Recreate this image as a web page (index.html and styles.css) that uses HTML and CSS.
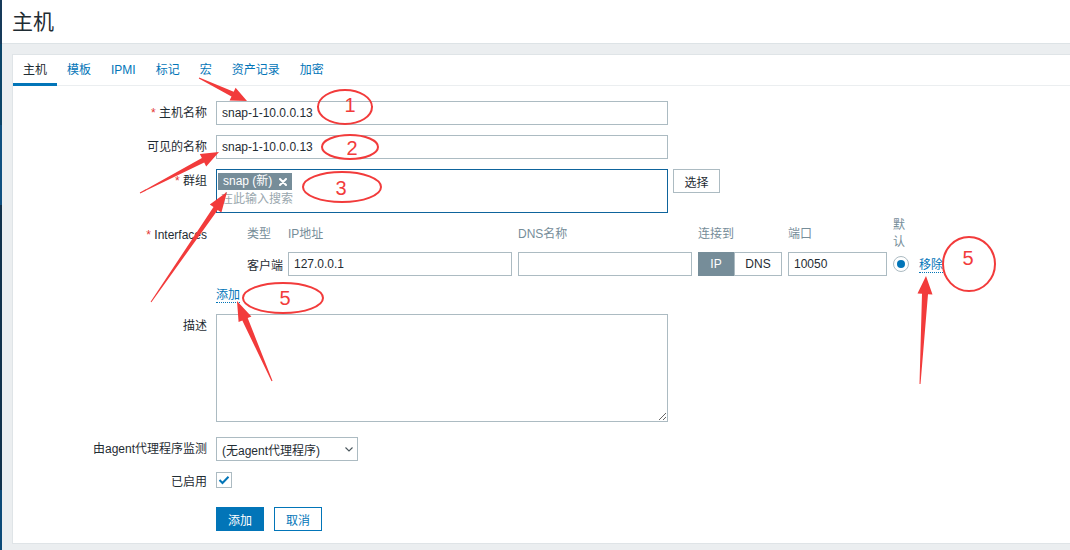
FILE: index.html
```html
<!DOCTYPE html>
<html lang="zh-CN">
<head>
<meta charset="utf-8">
<title>主机</title>
<link rel="stylesheet" href="styles.css">
</head>
<body>
<div class="app">
  <div class="sidebar-edge"></div>
  <div class="main">
    <header class="page-header"><h1>主机</h1></header>
    <div class="content">
      <div class="panel">
        <ul class="tabs">
          <li class="tab active">主机</li>
          <li class="tab">模板</li>
          <li class="tab">IPMI</li>
          <li class="tab">标记</li>
          <li class="tab">宏</li>
          <li class="tab">资产记录</li>
          <li class="tab">加密</li>
        </ul>
        <form class="form">
          <div class="row">
            <label class="lbl"><span class="req">*</span> 主机名称</label>
            <div class="field"><input class="input wide" type="text" value="snap-1-10.0.0.13"></div>
          </div>
          <div class="row">
            <label class="lbl">可见的名称</label>
            <div class="field"><input class="input wide" type="text" value="snap-1-10.0.0.13"></div>
          </div>
          <div class="row row-groups">
            <label class="lbl"><span class="req">*</span> 群组</label>
            <div class="field ms-line">
              <div class="ms">
                <span class="tag">snap (新)<svg class="tag-x" width="8" height="8" viewBox="0 0 8 8"><path d="M1 1L7 7M7 1L1 7" stroke="#fff" stroke-width="2" stroke-linecap="round"/></svg></span>
                <div class="ms-ph">在此输入搜索</div>
              </div>
              <button type="button" class="btn-alt">选择</button>
            </div>
          </div>
          <div class="row row-iface">
            <label class="lbl lbl-iface"><span class="req">*</span> Interfaces</label>
            <div class="field">
              <div class="iface">
                <div></div>
                <div class="ih">类型</div>
                <div class="ih">IP地址</div>
                <div class="ih">DNS名称</div>
                <div class="ih">连接到</div>
                <div class="ih">端口</div>
                <div class="ih ih-def">默认</div>
                <div></div>

                <div></div>
                <div class="itype">客户端</div>
                <input class="input" type="text" value="127.0.0.1">
                <input class="input" type="text" value="">
                <div class="toggle"><span class="seg on">IP</span><span class="seg">DNS</span></div>
                <input class="input" type="text" value="10050">
                <span class="radio"><span class="dot"></span></span>
                <a class="link remove">移除</a>
              </div>
              <div class="add-wrap"><a class="link">添加</a></div>
            </div>
          </div>
          <div class="row row-desc">
            <label class="lbl">描述</label>
            <div class="field"><textarea class="ta"></textarea></div>
          </div>
          <div class="row row-proxy">
            <label class="lbl">由agent代理程序监测</label>
            <div class="field">
              <div class="select"><span>(无agent代理程序)</span><svg width="8" height="5" viewBox="0 0 8 5"><path d="M0.5 0.5L4 4L7.5 0.5" fill="none" stroke="#4a565c" stroke-width="1.1"/></svg></div>
            </div>
          </div>
          <div class="row row-enabled">
            <label class="lbl lbl-enabled">已启用</label>
            <div class="field cb-field">
              <span class="checkbox"><svg width="12" height="10" viewBox="0 0 12 10"><path d="M1.5 5L4.5 8L10.5 1.8" fill="none" stroke="#0275b8" stroke-width="2"/></svg></span>
            </div>
          </div>
          <div class="row row-buttons">
            <div class="lbl"></div>
            <div class="field btns">
              <button type="button" class="btn primary">添加</button>
              <button type="button" class="btn secondary">取消</button>
            </div>
          </div>
        </form>
      </div>
    </div>
  </div>
</div>

<svg class="annot" width="1070" height="550" viewBox="0 0 1070 550">
  <g fill="#f23b3b">
    <polygon points="198.8,78.5 231.5,96.4 229.6,100.4 247,101 235.6,87.8 233.7,91.8 199.2,77.6"/>
    <polygon points="140.2,193.4 204.2,162.5 206.2,166.5 219,152 199.8,154.1 201.9,158.1 139.8,192.6"/>
    <polygon points="151.4,302.3 217.7,209.9 221.4,212.5 227,192 209.8,204.5 213.5,207.1 150.6,301.7"/>
    <polygon points="272.5,380.8 247.7,318.1 251.4,316.5 237,301 238.6,322.1 242.3,320.5 271.5,381.2"/>
    <polygon points="920.5,384 928,294.2 932.5,294.4 926,276 917.5,293.6 922,293.8 919.5,384"/>
  </g>
  <g fill="none" stroke="#f23b3b" stroke-width="2">
    <ellipse cx="345" cy="107" rx="27" ry="17"/>
    <ellipse cx="350" cy="147" rx="28" ry="12"/>
    <ellipse cx="342" cy="187" rx="39" ry="15"/>
    <ellipse cx="283" cy="298" rx="40" ry="15"/>
    <ellipse cx="969" cy="264" rx="26" ry="27"/>
  </g>
  <g class="annot-num" fill="#f23b3b" text-anchor="middle">
    <text x="350" y="112">1</text>
    <text x="352" y="155">2</text>
    <text x="341" y="195">3</text>
    <text x="285" y="305">5</text>
    <text x="968" y="265">5</text>
  </g>
</svg>
</body>
</html>
```

FILE: styles.css
```css
* { box-sizing: border-box; }

html, body {
  margin: 0;
  padding: 0;
}

body {
  position: relative;
  width: 1070px;
  height: 550px;
  overflow: hidden;
  background: #ebeef0;
  font-family: "Liberation Sans", Arial, "Noto Sans CJK SC", sans-serif;
  font-size: 12px;
  color: #1f2c33;
}

.app {
  display: flex;
  height: 550px;
}

.sidebar-edge {
  flex: none;
  width: 2px;
  background: linear-gradient(#173a5a 0, #173a5a 44px, #0b4468 44px, #0b4468 125px, #0f5080 125px, #0f5080 205px, #11324c 205px, #11324c 490px, #0c4a78 490px);
}

.main {
  flex: 1;
  display: flex;
  flex-direction: column;
  min-width: 0;
}

.page-header {
  height: 44px;
  flex: none;
  background: #fff;
  border-bottom: 1px solid #dde3e6;
  padding-left: 10px;
  display: flex;
  align-items: center;
}

.page-header h1 {
  margin: 0;
  font-size: 21px;
  font-weight: normal;
  line-height: 24px;
  color: #1f2c33;
}

.content {
  flex: 1;
  padding: 10px 0 6px 10px;
}

.panel {
  height: 100%;
  background: #fff;
  border: 1px solid #dfe4e7;
  border-right: none;
}

.tabs {
  display: flex;
  list-style: none;
  margin: 0;
  padding: 0;
  border-bottom: 1px solid #ebeef0;
}

.tab {
  padding: 8px 10px 6px;
  line-height: 14px;
  color: #0275b8;
  border-bottom: 3px solid transparent;
  margin-bottom: -1px;
  white-space: nowrap;
}

.tab.active {
  color: #1f2c33;
  border-bottom-color: #0275b8;
}

.form {
  padding-top: 15px;
}

.row {
  display: flex;
  align-items: flex-start;
  margin-bottom: 10px;
}

.lbl {
  flex: none;
  width: 194px;
  text-align: right;
  line-height: 24px;
  white-space: nowrap;
}

.req {
  color: #e33734;
}

.field {
  margin-left: 9px;
}

.input {
  display: block;
  height: 24px;
  border: 1px solid #acbbc2;
  padding: 0 5px;
  margin: 0;
  font: inherit;
  color: #1f2c33;
  background: #fff;
  outline: none;
  width: 100%;
}

.input.wide {
  width: 452px;
}

/* groups multiselect */
.row-groups {
  margin-bottom: 4px;
}

.ms-line {
  display: flex;
  align-items: flex-start;
  gap: 5px;
}

.ms {
  width: 452px;
  height: 44px;
  border: 1px solid #0e649c;
  background: #fff;
  padding: 3px 0 0 1px;
}

.tag {
  display: inline-flex;
  align-items: center;
  gap: 7px;
  height: 17px;
  padding: 0 5px;
  background: #768d99;
  color: #fff;
  line-height: 17px;
}

.tag-x {
  display: block;
}

.ms-ph {
  padding-left: 3px;
  line-height: 18px;
  color: #9aa7ae;
}

.btn-alt {
  height: 24px;
  width: 47px;
  padding: 0;
  border: 1px solid #acbbc2;
  background: #fff;
  font: inherit;
  color: #1f2c33;
}

/* interfaces */
.lbl-iface {
  padding-top: 6px;
}

.iface {
  display: grid;
  grid-template-columns: 25px 35px 224px 174px 84px 99px 16px auto;
  grid-template-rows: 34px 24px;
  column-gap: 6px;
  row-gap: 1px;
  align-items: center;
}

.ih {
  color: #768d99;
  line-height: 17px;
  white-space: nowrap;
}

.ih-def {
  white-space: normal;
  width: 16px;
}

.itype {
  white-space: nowrap;
}

.toggle {
  display: flex;
  height: 24px;
}

.seg {
  display: flex;
  align-items: center;
  justify-content: center;
  height: 24px;
  border: 1px solid #acbbc2;
  background: #fff;
  color: #1f2c33;
  width: 48px;
}

.seg.on {
  width: 36px;
  background: #768d99;
  border-color: #768d99;
  color: #fff;
}

.radio {
  width: 16px;
  height: 16px;
  border: 1px solid #acbbc2;
  border-radius: 50%;
  display: flex;
  align-items: center;
  justify-content: center;
  background: #fff;
}

.dot {
  width: 8px;
  height: 8px;
  border-radius: 50%;
  background: #0275b8;
}

.link {
  color: #0275b8;
  text-decoration: none;
  border-bottom: 1px dotted #0275b8;
  line-height: 14px;
  display: inline-block;
  cursor: pointer;
}

.remove {
  justify-self: start;
  margin-left: 4px;
  margin-top: 2px;
}

.add-wrap {
  margin-top: 12px;
  height: 15px;
}

.row-iface {
  margin-bottom: 11px;
}

/* description */
.ta {
  display: block;
  width: 452px;
  height: 108px;
  margin: 0;
  border: 1px solid #acbbc2;
  padding: 4px 5px;
  font: inherit;
  color: #1f2c33;
  background: #fff;
  outline: none;
}

.row-desc {
  margin-bottom: 15px;
}

/* proxy select */
.select {
  width: 142px;
  height: 24px;
  border: 1px solid #acbbc2;
  padding: 0 4px 0 5px;
  display: flex;
  align-items: center;
  justify-content: space-between;
  background: #fff;
  white-space: nowrap;
}

.select svg {
  display: block;
}

.row-proxy {
  margin-bottom: 7px;
}

/* enabled checkbox */
.lbl-enabled {
  padding-top: 2px;
}

.cb-field {
  height: 24px;
  display: flex;
  align-items: center;
}

.checkbox {
  width: 16px;
  height: 16px;
  border: 1px solid #acbbc2;
  display: flex;
  align-items: center;
  justify-content: center;
  background: #fff;
}

.checkbox svg {
  display: block;
}

.row-enabled {
  margin-bottom: 13px;
}

/* buttons */
.btns {
  display: flex;
  gap: 10px;
}

.btn {
  height: 24px;
  padding: 0 11px;
  font: inherit;
  border: 1px solid #0275b8;
  cursor: pointer;
}

.btn.primary {
  background: #0275b8;
  color: #fff;
}

.btn.secondary {
  background: #fff;
  color: #0275b8;
}

/* red annotations over the screenshot */
.annot {
  position: absolute;
  left: 0;
  top: 0;
  pointer-events: none;
}

.annot-num {
  font-family: "Liberation Sans", Arial, sans-serif;
  font-size: 20px;
}
```
